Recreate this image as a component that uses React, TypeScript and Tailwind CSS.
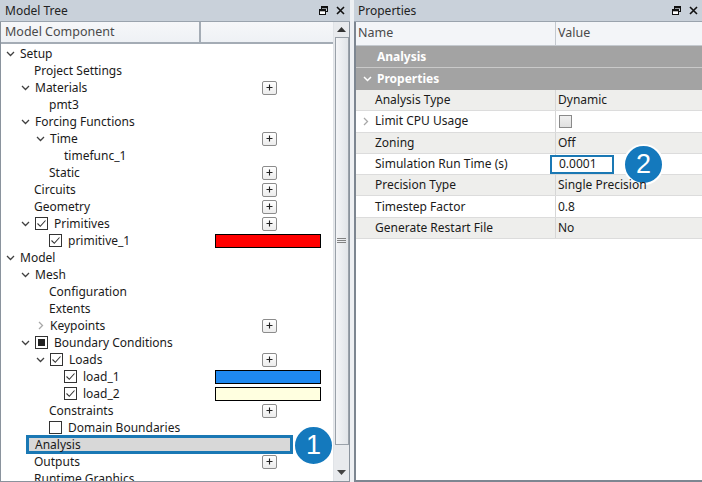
import React from "react";

const FONT = { fontFamily: '"Noto Sans", "Open Sans", Arial, sans-serif' };

function ChevDown({ light }: { light?: boolean }) {
  return (
    <svg width="9" height="6" viewBox="0 0 9 6" className="shrink-0">
      <polyline points="1,1 4.5,4.5 8,1" fill="none" stroke={light ? "#a0a0a0" : "#404040"} strokeWidth="1.3" />
    </svg>
  );
}
function ChevRight({ light }: { light?: boolean }) {
  return (
    <svg width="6" height="9" viewBox="0 0 6 9" className="shrink-0">
      <polyline points="1,1 4.5,4.5 1,8" fill="none" stroke={light ? "#a8a8a8" : "#404040"} strokeWidth="1.3" />
    </svg>
  );
}

function CheckBox({ state }: { state: "on" | "off" | "mixed" }) {
  return (
    <span className="w-[13px] h-[13px] border border-[#333] bg-white flex items-center justify-center shrink-0">
      {state === "on" && (
        <svg width="11" height="11" viewBox="0 0 11 11">
          <polyline points="1.5,5.5 4.3,8.3 9.5,2.5" fill="none" stroke="#333" strokeWidth="1.1" />
        </svg>
      )}
      {state === "mixed" && <span className="w-[7px] h-[7px] bg-[#222]" />}
    </span>
  );
}

function PlusBtn() {
  return (
    <span className="ml-[60px] w-[15px] h-[14px] border border-[#8c8c8c] rounded-[2px] bg-gradient-to-b from-white to-[#ececec] flex items-center justify-center shrink-0">
      <svg width="7" height="7" viewBox="0 0 7 7">
        <path d="M3.5 0.5V6.5M0.5 3.5H6.5" stroke="#222" strokeWidth="1.1" />
      </svg>
    </span>
  );
}

type Node = {
  label: string;
  level: number;
  chev?: "down" | "right";
  check?: "on" | "off" | "mixed";
  plus?: boolean;
  swatch?: string;
};

const nodes: Node[] = [
  { label: "Setup", level: 0, chev: "down" },
  { label: "Project Settings", level: 1 },
  { label: "Materials", level: 1, chev: "down", plus: true },
  { label: "pmt3", level: 2 },
  { label: "Forcing Functions", level: 1, chev: "down" },
  { label: "Time", level: 2, chev: "down", plus: true },
  { label: "timefunc_1", level: 3 },
  { label: "Static", level: 2, plus: true },
  { label: "Circuits", level: 1, plus: true },
  { label: "Geometry", level: 1, plus: true },
  { label: "Primitives", level: 1, chev: "down", check: "on", plus: true },
  { label: "primitive_1", level: 2, check: "on", swatch: "#ff0000" },
  { label: "Model", level: 0, chev: "down" },
  { label: "Mesh", level: 1, chev: "down" },
  { label: "Configuration", level: 2 },
  { label: "Extents", level: 2 },
  { label: "Keypoints", level: 2, chev: "right", plus: true },
  { label: "Boundary Conditions", level: 1, chev: "down", check: "mixed" },
  { label: "Loads", level: 2, chev: "down", check: "on", plus: true },
  { label: "load_1", level: 3, check: "on", swatch: "#1e88f0" },
  { label: "load_2", level: 3, check: "on", swatch: "#ffffe0" },
  { label: "Constraints", level: 2, plus: true },
  { label: "Domain Boundaries", level: 2, check: "off" },
];

const after: Node[] = [
  { label: "Outputs", level: 1, plus: true },
  { label: "Runtime Graphics", level: 1 },
];

function TreeRow({ n }: { n: Node }) {
  const textX = 18 + 15 * n.level;
  return (
    <div className="h-[17px] flex items-center shrink-0 text-[#1a1a1a]">
      <div className="w-[201px] flex items-center h-full" style={{ paddingLeft: (n.chev ? textX - 13 : textX) + "px" }}>
        {n.chev && (
          <span className="w-[14px] flex items-center justify-start shrink-0">
            {n.chev === "down" ? <ChevDown /> : <span className="pl-[2px]"><ChevRight light /></span>}
          </span>
        )}
        {n.check && <CheckBox state={n.check} />}
        <span className={"whitespace-nowrap leading-none " + (n.check ? "ml-[6px]" : "")}>{n.label}</span>
      </div>
      <div className="flex items-center h-full">
        {n.plus && <PlusBtn />}
        {n.swatch && <span className="ml-[13px] w-[106px] h-[14px] border border-black" style={{ background: n.swatch }} />}
      </div>
    </div>
  );
}

function TitleIcons() {
  return (
    <div className="flex items-center gap-[8px]">
      <svg width="9" height="9" viewBox="0 0 9 9">
        <rect x="2.5" y="0.5" width="6" height="5" fill="none" stroke="#111" strokeWidth="1" />
        <rect x="2.5" y="0.5" width="6" height="1.8" fill="#111" />
        <rect x="0.5" y="3.5" width="6" height="5" fill="#fff" stroke="#111" strokeWidth="1" />
        <rect x="0.5" y="3.5" width="6" height="1.8" fill="#111" />
      </svg>
      <svg width="9" height="9" viewBox="0 0 9 9">
        <path d="M1 1L8 8M8 1L1 8" stroke="#111" strokeWidth="1.6" />
      </svg>
    </div>
  );
}

type Prop = { name: string; value?: string; kind?: "check" | "input"; chev?: boolean };
const props: Prop[] = [
  { name: "Analysis Type", value: "Dynamic" },
  { name: "Limit CPU Usage", kind: "check", chev: true },
  { name: "Zoning", value: "Off" },
  { name: "Simulation Run Time (s)", value: "0.0001", kind: "input" },
  { name: "Precision Type", value: "Single Precision" },
  { name: "Timestep Factor", value: "0.8" },
  { name: "Generate Restart File", value: "No" },
];

function Badge({ n }: { n: string }) {
  return (
    <div className="w-[41px] h-[41px] rounded-full bg-[#1479bd] border-[2px] border-white flex items-center justify-center text-white text-[27px] leading-none" style={{ fontFamily: '"Liberation Sans", Arial, sans-serif' }}>
      {n}
    </div>
  );
}

export default function App() {
  return (
    <div className="w-[702px] h-[482px] flex bg-[#eef0f3] overflow-hidden text-[12px]" style={FONT}>
      {/* Left panel */}
      <div className="w-[350px] h-full flex flex-col">
        <div className="h-[22px] bg-[#c9d1da] flex items-center justify-between pl-[5px] pr-[5px] shrink-0 border-b border-[#9aa3ad]">
          <span className="text-[12px] text-[#222]">Model Tree</span>
          <TitleIcons />
        </div>
        <div className="flex-1 flex border-x border-b border-[#8a939d] bg-white min-h-0">
          <div className="flex-1 flex flex-col min-w-0 overflow-hidden">
            <div className="h-[22px] shrink-0 flex bg-gradient-to-b from-[#f6f7f9] to-[#eef1f5] border-b-[2px] border-[#a4acb5] text-[#4a4a4a] text-[12.5px]">
              <div className="w-[200px] border-r-[2px] border-[#a4acb5] flex items-center pl-[4px]">Model Component</div>
              <div className="flex-1" />
            </div>
            <div className="flex flex-col pt-[1px]">
              {nodes.map((n, i) => (
                <TreeRow key={i} n={n} />
              ))}
              <div className="h-[17px] flex items-center shrink-0 relative">
                <div className="ml-[25px] w-[267px] h-[19px] bg-[#d8d8d8] border-[3px] border-[#1a78b4] flex items-center pl-[6px] text-[#1a1a1a]">
                  Analysis
                </div>
                <div className="absolute left-[292px] top-[-11px]">
                  <Badge n="1" />
                </div>
              </div>
              {after.map((n, i) => (
                <TreeRow key={"a" + i} n={n} />
              ))}
            </div>
          </div>
          {/* scrollbar */}
          <div className="w-[16px] shrink-0 bg-[#e8eaed] flex flex-col items-center border-l border-[#e0e3e7]">
            <div className="h-[15px] w-full flex items-center justify-center">
              <svg width="9" height="5" viewBox="0 0 9 5"><polygon points="0,5 4.5,0 9,5" fill="#333" /></svg>
            </div>
            <div className="w-[14px] h-[408px] bg-gradient-to-r from-[#f4f5f7] to-[#e1e4e8] border border-[#9aa1a9] flex items-center justify-center">
              <svg width="9" height="6" viewBox="0 0 9 6">
                <path d="M0 0.5H9M0 2.5H9M0 4.5H9" stroke="#666" strokeWidth="0.8" />
              </svg>
            </div>
            <div className="flex-1" />
            <div className="h-[18px] w-full flex items-center justify-center">
              <svg width="9" height="5" viewBox="0 0 9 5"><polygon points="0,0 9,0 4.5,5" fill="#444" /></svg>
            </div>
          </div>
        </div>
      </div>

      {/* Right panel */}
      <div className="w-[348px] ml-[4px] h-full flex flex-col">
        <div className="h-[22px] bg-[#c9d1da] flex items-center justify-between pl-[4px] pr-[4px] shrink-0 border-b border-[#9aa3ad]">
          <span className="text-[12px] text-[#222]">Properties</span>
          <TitleIcons />
        </div>
        <div className="flex-1 flex flex-col border-l-[2px] border-b-[2px] border-[#7d8691] bg-white min-h-0">
          <div className="h-[24px] shrink-0 flex bg-[#f3f5f8] border-b border-[#c4c9cf] text-[#4a4a4a] text-[12.5px]">
            <div className="w-[200px] border-r border-[#c4c9cf] flex items-center pl-[2px]">Name</div>
            <div className="flex-1 flex items-center pl-[2px]">Value</div>
          </div>
          <div className="h-[22px] shrink-0 bg-[#a3a3a3] flex items-center pl-[21px] text-white font-bold border-b border-[#c9c9c9]">
            Analysis
          </div>
          <div className="h-[22px] shrink-0 bg-[#a3a3a3] flex items-center text-white font-bold">
            <span className="w-[21px] flex justify-center pl-[2px]">
              <svg width="9" height="6" viewBox="0 0 9 6">
                <polyline points="1,1 4.5,4.5 8,1" fill="none" stroke="#fff" strokeWidth="1.5" />
              </svg>
            </span>
            Properties
          </div>
          {props.map((p, i) => (
            <div key={i} className={"h-[21.3px] shrink-0 flex items-center border-b border-[#dcdcdc] text-[#1a1a1a] " + (i % 2 === 0 ? "bg-[#eeeeec]" : "bg-white")}>
              <div className="w-[200px] h-full flex items-center border-r border-[#d6d6d6]">
                <span className="w-[19px] flex justify-center">{p.chev && <ChevRight light />}</span>
                <span className="whitespace-nowrap">{p.name}</span>
              </div>
              <div className="flex-1 h-full flex items-center relative">
                {p.kind === "check" && (
                  <span className="ml-[3px] w-[13px] h-[13px] border border-[#8a8a8a] bg-gradient-to-b from-[#f0f0f0] to-[#e0e0e0]" />
                )}
                {p.kind === "input" && (
                  <>
                    <div className="ml-[-6px] w-[64px] h-[19px] border-[2px] border-[#1a78b4] bg-white flex items-center pl-[7px]">{p.value}</div>
                    <div className="absolute left-[67px] top-[-10px]">
                      <Badge n="2" />
                    </div>
                  </>
                )}
                {!p.kind && <span className="pl-[2px] whitespace-nowrap">{p.value}</span>}
              </div>
            </div>
          ))}
        </div>
      </div>
    </div>
  );
}
